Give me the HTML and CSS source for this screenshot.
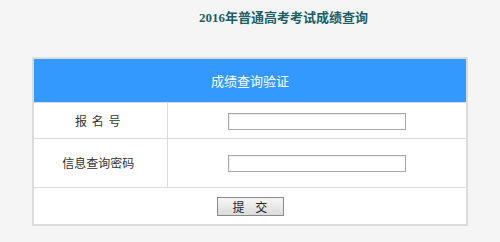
FILE: index.html
```html
<!DOCTYPE html>
<html lang="zh-CN">
<head>
  <meta charset="UTF-8">
  <title>2016年普通高考考试成绩查询</title>
  <link rel="stylesheet" href="styles.css">
</head>
<body>
  <div class="page">
    <h1 class="title">2016年普通高考考试成绩查询</h1>

    <form class="query">
      <table class="box">
        <tr>
          <th colspan="2" class="head">成绩查询验证</th>
        </tr>
        <tr class="row1">
          <td class="label">报&nbsp;名&nbsp;号</td>
          <td class="field"><input type="text" class="txt"></td>
        </tr>
        <tr class="row2">
          <td class="label">信息查询密码</td>
          <td class="field"><input type="password" class="txt"></td>
        </tr>
        <tr class="row3">
          <td colspan="2" class="btns"><button type="button" class="submit">提&nbsp;&nbsp;&nbsp;&nbsp;交</button></td>
        </tr>
      </table>
    </form>
  </div>
</body>
</html>
```

FILE: styles.css
```css
* {
	margin: 0;
	padding: 0;
	box-sizing: border-box;
}

body {
	background: #f5f5f5;
	font-family: "Noto Sans CJK SC", "DejaVu Sans", sans-serif;
	font-size: 12px;
	color: #333;
}

.page {
	width: 500px;
	padding: 11px 0 0 32px;
}

.title {
	height: 46px;
	padding-left: 167px;
	font-family: "Liberation Serif", "Noto Sans CJK SC", serif;
	font-size: 13px;
	font-weight: bold;
	line-height: 14px;
	color: #1c5d66;
}

.box {
	width: 436px;
	border-collapse: collapse;
	background: #fff;
	border: 2px solid #dcdcdc;
}

.box td {
	border: 1px solid #dcdcdc;
	text-align: center;
}

.head {
	height: 44px;
	background: #3399fe;
	color: #fff;
	font-size: 13px;
	font-weight: normal;
	text-align: center;
}

.label {
	width: 134px;
	padding-right: 4px;
}

.row1 .label {
	letter-spacing: 1px;
}

.row1 td {
	height: 36px;
}

.row2 td {
	height: 49px;
}

.row3 td {
	height: 38px;
}

.txt {
	width: 178px;
	height: 17px;
	border: 1px solid #a9a9a9;
	box-shadow: inset 1px 1px 1px #eee;
	background: #fff;
	vertical-align: middle;
}

.submit {
	width: 67px;
	height: 19px;
	border: 1px solid #8a8a8a;
	background: linear-gradient(#f6f6f6, #dcdcdc);
	font-family: "Noto Sans CJK SC", sans-serif;
	font-size: 12px;
	line-height: 15px;
	color: #222;
	vertical-align: middle;
}
```
